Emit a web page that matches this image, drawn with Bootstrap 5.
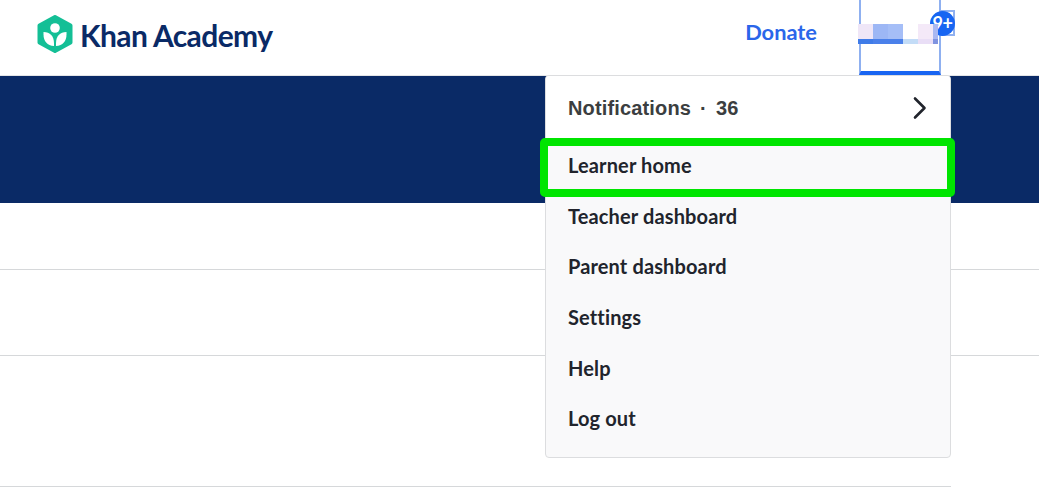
<!DOCTYPE html>
<html lang="en">
<head>
<meta charset="utf-8">
<title>Khan Academy</title>
<link href="https://cdn.jsdelivr.net/npm/bootstrap@5.3.0/dist/css/bootstrap.min.css" rel="stylesheet">
<style>
html,body{height:493px;overflow:hidden;background:#fff;font-family:"Lato",sans-serif;}
.ka-top{height:76px;border-bottom:1px solid #e4e5e7;padding-left:37px;padding-right:98px;}
.ka-logo{gap:7px;color:#0a2a66;padding-bottom:7px;}
.ka-word{font-size:30px;font-weight:700;letter-spacing:-.6px;line-height:1;color:#0a2a66;margin-top:1px;}
.ka-donate{font-size:21.800px;font-weight:700;color:#2a66ea;text-decoration:none;margin-right:42px;margin-top:16px;}
.ka-user{width:82px;height:75px;border-left:2px solid #8fb0f0;border-right:2px solid #8fb0f0;border-bottom:4px solid #1865f2;position:relative;}
.ka-blur{position:absolute;left:-3px;top:24px;width:80px;display:grid;grid-template-columns:15px 15px 15px 15px 15px 5px;}
.ka-blur i{display:block;height:15px;}
.ka-blur b{display:block;height:5px;}
.ka-box{position:absolute;left:78px;top:10px;width:16px;height:26px;border:2px solid #8fb0f0;}
.ka-badge{position:absolute;left:69px;top:11px;width:25px;height:25px;border-radius:50%;background:#1865f2;color:#fff;font-size:18px;font-weight:700;line-height:24px;text-align:center;font-family:"Lato",sans-serif;letter-spacing:-.5px;white-space:nowrap;}
.ka-band{height:127px;background:#0a2a66;}
.ka-row1{height:66px;}
.ka-rule{border-top:1px solid #d6d8da;}
.ka-row2{height:86px;}
.ka-row3{height:131px;}
.ka-last{width:951px;}
.ka-menu{position:absolute;left:545px;top:75px;width:406px;height:383px;background:#f9f9fa;border:1px solid #dcdddf;border-radius:4px;overflow:hidden;}
.ka-notif{height:64px;background:#fff;padding:0 23px 0 22px;font-family:"Liberation Sans",sans-serif;font-size:20px;font-weight:700;color:#3b3e40;letter-spacing:.15px;}
.ka-notif .ka-sep{margin:0 9px;}
.ka-item{display:block;height:50.700px;line-height:50.700px;padding-left:22px;font-size:20px;letter-spacing:.13px;font-weight:700;color:#21242c;text-decoration:none;}
.ka-mark{position:absolute;left:540px;top:138px;width:415px;height:59px;border:8px solid #00e500;border-radius:5px;}
</style>
</head>
<body class="position-relative">
<header class="ka-top d-flex align-items-center justify-content-between">
  <div class="ka-logo d-flex align-items-center">
    <svg width="36" height="38" viewBox="0 0 36 38" aria-hidden="true">
      <path d="M18 2 33.500 10.500V27.500L18 36 2.500 27.500V10.500Z" fill="#14bf96" stroke="#14bf96" stroke-linejoin="round" stroke-width="4"/>
      <circle cx="18" cy="13" r="4.800" fill="#fff"/>
      <path d="M6.500 17c6.600 0 10.500 4 10.500 11.500v2.500c-6.800-.4-10.500-4.800-10.500-11.500Z" fill="#fff"/>
      <path d="M29.500 17c-6.600 0-10.500 4-10.500 11.500v2.500c6.800-.4 10.500-4.800 10.500-11.500Z" fill="#fff"/>
    </svg>
    <span class="ka-word">Khan Academy</span>
  </div>
  <div class="d-flex align-items-start align-self-start">
    <a class="ka-donate" href="#">Donate</a>
    <div class="ka-user">
      <span class="ka-box"></span>
      <span class="ka-badge">9+</span>
      <div class="ka-blur">
        <i style="background:#efe6f7"></i><i style="background:#9db7f5"></i><i style="background:#a5bef7"></i><i style="background:#fff"></i><i style="background:#f4e9f8"></i><i style="background:#aab8f2"></i>
        <b style="background:#3f7be8"></b><b style="background:#4a80ea"></b><b style="background:#4a80ea"></b><b style="background:#c3dcf7"></b><b style="background:#e9def6"></b><b style="background:#7f93e0"></b>
      </div>
    </div>
  </div>
</header>
<section class="ka-band"></section>
<div class="ka-row1"></div>
<div class="ka-rule ka-row2"></div>
<div class="ka-rule ka-row3"></div>
<div class="ka-rule ka-last"></div>
<nav class="ka-menu">
  <div class="ka-notif d-flex align-items-center justify-content-between">
    <span>Notifications<span class="ka-sep">·</span>36</span>
    <svg width="14" height="24" viewBox="0 0 14 24" aria-hidden="true"><path d="M2 2.500 11.500 12 2 21.500" fill="none" stroke="#21242c" stroke-width="2.600" stroke-linecap="round" stroke-linejoin="round"/></svg>
  </div>
  <a class="ka-item" href="#">Learner home</a>
  <a class="ka-item" href="#">Teacher dashboard</a>
  <a class="ka-item" href="#">Parent dashboard</a>
  <a class="ka-item" href="#">Settings</a>
  <a class="ka-item" href="#">Help</a>
  <a class="ka-item" href="#">Log out</a>
</nav>
<div class="ka-mark"></div>
</body>
</html>
